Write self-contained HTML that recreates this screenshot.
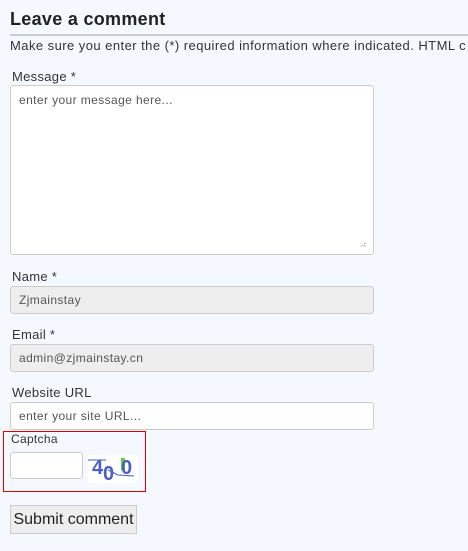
<html><head><style>
body{margin:0;background:#f5f9ff;font-family:"Liberation Sans",sans-serif;color:#333;width:468px;height:551px;overflow:hidden;position:relative}
.a{position:absolute}
h2{position:absolute;left:10px;top:9px;margin:0;font-size:18px;font-weight:bold;color:#222;letter-spacing:0.3px}
.l{position:absolute;left:12px;font-size:13px;color:#333;letter-spacing:0.3px}
.i{position:absolute;left:10px;width:364px;border:1px solid #ccc;border-radius:3px;background:#fff;box-sizing:border-box;font-size:12px;color:#555;padding:0 8px;letter-spacing:0.4px}
.g{background:#eee}
</style></head><body>
<h2>Leave a comment</h2>
<div class="a" style="left:10px;top:34px;width:458px;height:2px;background:#ccc"></div>
<div class="a" style="left:10px;top:38px;font-size:13px;white-space:nowrap;color:#333;letter-spacing:0.45px">Make sure you enter the (*) required information where indicated. HTML c</div>
<div class="l" style="top:69px">Message *</div>
<div class="i" style="top:85px;height:170px;padding-top:7px">enter your message here...
<span class="a" style="right:6px;bottom:4px;font-size:9px;color:#aaa">⠴</span></div>
<div class="l" style="top:269px">Name *</div>
<div class="i g" style="top:286px;height:28px;line-height:26px">Zjmainstay</div>
<div class="l" style="top:327px">Email *</div>
<div class="i g" style="top:344px;height:28px;line-height:26px">admin@zjmainstay.cn</div>
<div class="l" style="top:385px">Website URL</div>
<div class="i" style="top:402px;height:28px;line-height:26px">enter your site URL...</div>
<div class="a" style="left:3px;top:431px;width:141px;height:59px;border:1px solid #d00"></div>
<div class="l" style="left:11px;top:432px;font-size:12px">Captcha</div>
<div class="a" style="left:10px;top:452px;width:73px;height:27px;border:1px solid #ccc;border-radius:3px;background:#fff;box-sizing:border-box"></div>
<svg class="a" style="left:88px;top:455px" width="50" height="28"><rect width="50" height="28" fill="#fff"/><rect x="33" y="3" width="4" height="12" fill="#6c4"/><text x="4" y="19" font-family="Liberation Sans" font-weight="bold" font-size="20" fill="#4a5fc0">4</text><text x="15" y="25" font-family="Liberation Sans" font-weight="bold" font-size="20" fill="#4a5fc0">0</text><text x="33" y="19" font-family="Liberation Sans" font-weight="bold" font-size="20" fill="#4a5fc0">0</text><path d="M0 5 L18 5 M20 15 L30 20 L46 21" stroke="#4a5fc0" fill="none"/></svg>
<div class="a" style="left:10px;top:505px;width:127px;height:29px;border:1px solid #ccc;background:#eee;box-sizing:border-box;font-size:16px;line-height:27px;text-align:center;color:#222">Submit comment</div>
</body></html>
